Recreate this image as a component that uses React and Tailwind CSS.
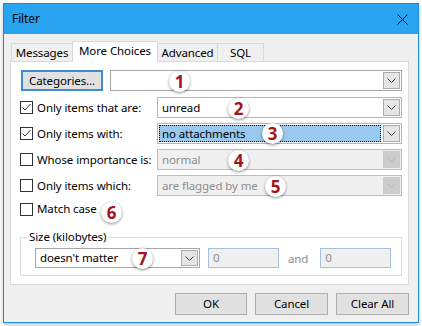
import React from "react";

function Chevron({ disabled }) {
  return (
    <svg width="9" height="5" viewBox="0 0 9 5" className="block">
      <path
        d="M0.5 0.5 L4.5 4.5 L8.5 0.5"
        fill="none"
        stroke={disabled ? "#b4b4b4" : "#404040"}
        strokeWidth="1"
      />
    </svg>
  );
}

function Combo({ value, disabled, selected, grey, className = "" }) {
  return (
    <div
      className={`h-[21px] flex items-stretch border p-[1px] ${
        grey ? "border-[#a6a6a6] bg-white" : disabled ? "border-[#a7c0dc] bg-[#f0f0f0]" : "border-[#9fbbdc] bg-white"
      } ${className}`}
    >
      <div className="flex-1 flex items-stretch pr-[2px]">
        {selected ? (
          <div className="flex-1 flex items-center bg-[#99c9ef] border border-dotted border-black pl-[2px]">
            {value}
          </div>
        ) : (
          <div
            className={`flex-1 flex items-center pl-[3px] ${
              disabled ? "text-[#8d8d8d]" : ""
            }`}
          >
            {value}
          </div>
        )}
      </div>
      <div
        className={`w-[17px] flex items-center justify-center border ${
          disabled ? "bg-[#cccccc] border-[#cccccc]" : "bg-[#e5e5e5] border-[#acacac]"
        }`}
      >
        <Chevron disabled={disabled} />
      </div>
    </div>
  );
}

function Checkbox({ checked }) {
  return (
    <div className="w-[13px] h-[13px] border border-[#333333] bg-white shrink-0">
      {checked && (
        <svg width="11" height="11" viewBox="0 0 11 11" className="block">
          <path d="M1.5 5.5 L4 8 L9.5 2" fill="none" stroke="#333333" strokeWidth="1" />
        </svg>
      )}
    </div>
  );
}

function CheckRow({ label, checked, children, className = "" }) {
  return (
    <div className={`flex items-center h-[21px] ${className}`}>
      <div className="w-[137px] flex items-center gap-[4px] whitespace-nowrap">
        <Checkbox checked={checked} />
        <span>{label}</span>
      </div>
      <div className="flex-1">{children}</div>
    </div>
  );
}

function Badge({ n, x, y }) {
  return (
    <div
      className="absolute w-[21px] h-[21px] rounded-full bg-white shadow-[0_1px_3px_rgba(0,0,0,0.45)] flex items-center justify-center text-[#a3131b] font-bold text-[17px] font-['Open_Sans',sans-serif]"
      style={{ left: x - 10, top: y - 10 }}
    >
      {n}
    </div>
  );
}

export default function App() {
  const tabs = [
    { name: "Messages", w: "w-[62px]" },
    { name: "More Choices", w: "w-[86px]", active: true },
    { name: "Advanced", w: "w-[61px]" },
    { name: "SQL", w: "w-[47px]" },
  ];

  return (
    <div className="relative w-[422px] h-[326px] bg-white pt-[3px] pl-[3px] font-['Noto_Sans',sans-serif] text-[11.5px] tracking-[-0.1px] leading-none text-black">
      <div className="w-[416px] h-[320px] border border-[#1c8ce0] flex flex-col shadow-[0_2px_4px_rgba(0,0,0,0.25)]">
        {/* title bar */}
        <div className="h-[30px] bg-[#29a4f0] flex items-center justify-between pl-[8px] pr-[10px]">
          <span className="text-[12px]">Filter</span>
          <svg width="11" height="11" viewBox="0 0 11 11">
            <path d="M0.5 0.5 L10.5 10.5 M10.5 0.5 L0.5 10.5" stroke="#000" strokeWidth="1" />
          </svg>
        </div>

        {/* body */}
        <div className="flex-1 bg-[#f0f0f0] pt-[7px] pl-[6px] pr-[9px] pb-[7px] flex flex-col">
          <div className="h-[21px] -mb-px flex items-end pl-[1px] relative z-10">
            {tabs.map((t, i) => (
              <div
                key={t.name}
                className={`${t.w} flex items-center justify-center whitespace-nowrap border-[#d9d9d9] ${
                  i > 0 ? "-ml-px" : ""
                } ${
                  t.active
                    ? "h-[21px] bg-white border-l border-r border-t relative z-10 pb-[2px]"
                    : "h-[19px] bg-[#f0f0f0] border"
                }`}
              >
                {t.name}
              </div>
            ))}
          </div>

          <div className="h-[224px] bg-white border border-[#d9d9d9] pt-[8px] pl-[9px] pr-[6px]">
            <div className="flex items-center h-[21px] pl-[1px]">
              <div className="w-[82px] h-[21px] bg-[#e1e1e1] border-2 border-[#3d8ad6] flex items-center justify-center">
                Categories...
              </div>
              <Combo className="ml-[7px] flex-1" grey value="" />
            </div>

            <CheckRow label="Only items that are:" checked className="mt-[6px]">
              <Combo value="unread" />
            </CheckRow>
            <CheckRow label="Only items with:" checked className="mt-[5px]">
              <Combo value="no attachments" selected />
            </CheckRow>
            <CheckRow label="Whose importance is:" className="mt-[5px]">
              <Combo value="normal" disabled />
            </CheckRow>
            <CheckRow label="Only items which:" className="mt-[5px]">
              <Combo value="are flagged by me" disabled />
            </CheckRow>

            <div className="flex items-center gap-[4px] mt-[6px] h-[14px]">
              <Checkbox />
              <span>Match case</span>
            </div>

            <div className="relative mt-[21px] w-[382px] h-[39px] border border-[#dcdcdc] pt-[10px] pl-[14px] flex items-start">
              <span className="absolute -top-[7px] left-[6px] bg-white px-[2px]">Size (kilobytes)</span>
              <Combo grey value="doesn't matter" className="w-[165px] !h-[20px]" />
              <div className="ml-[8px] w-[71px] h-[20px] border border-[#a7c0dc] bg-[#f0f0f0] flex items-center pl-[4px] text-[#8d8d8d]">
                0
              </div>
              <span className="ml-[9px] mt-[5px] text-[#8d8d8d]">and</span>
              <div className="ml-[12px] w-[71px] h-[20px] border border-[#a7c0dc] bg-[#f0f0f0] flex items-center pl-[4px] text-[#8d8d8d]">
                0
              </div>
            </div>
          </div>

          <div className="mt-[8px] flex justify-end gap-[8px]">
            {["OK", "Cancel", "Clear All"].map((b) => (
              <div
                key={b}
                className={`${b === "OK" ? "w-[72px]" : "w-[73px]"} h-[22px] bg-[#e1e1e1] border border-[#adadad] flex items-center justify-center`}
              >
                {b}
              </div>
            ))}
          </div>
        </div>
      </div>

      <Badge n="1" x={179} y={81} />
      <Badge n="2" x={238} y={108} />
      <Badge n="3" x={272} y={133} />
      <Badge n="4" x={238} y={160} />
      <Badge n="5" x={275} y={186} />
      <Badge n="6" x={111} y={212} />
      <Badge n="7" x={142} y={258} />
    </div>
  );
}
